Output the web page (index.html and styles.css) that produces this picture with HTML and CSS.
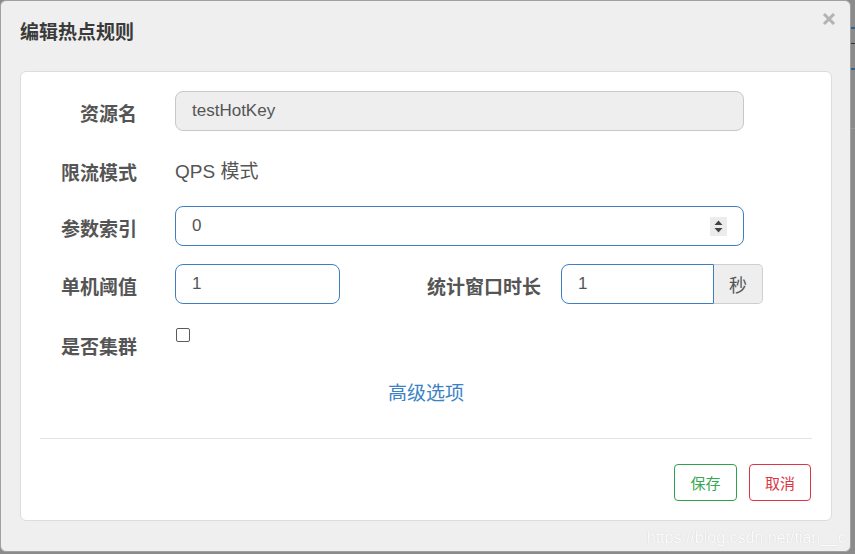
FILE: index.html
```html
<!DOCTYPE html>
<html lang="zh-CN">
<head>
<meta charset="utf-8">
<title>编辑热点规则</title>
<link rel="stylesheet" href="styles.css">
</head>
<body>
<div class="modal">
  <div class="modal-header">
    <h4 class="modal-title">编辑热点规则</h4>
    <span class="close" aria-label="关闭">
      <svg width="14" height="14" viewBox="0 0 14 14"><path d="M2 2 L12 12 M12 2 L2 12" stroke="#b3b3b3" stroke-width="3" stroke-linecap="butt"/></svg>
    </span>
  </div>
  <div class="panel">
    <div class="form-row r1">
      <label class="label">资源名</label>
      <input class="control wide disabled" type="text" value="testHotKey" disabled>
    </div>
    <div class="form-row r2">
      <label class="label">限流模式</label>
      <span class="static">QPS 模式</span>
    </div>
    <div class="form-row r3">
      <label class="label">参数索引</label>
      <div class="control wide number">
        <input class="bare" type="text" value="0">
        <span class="spinner">
          <svg width="17" height="19" viewBox="0 0 17 19"><path d="M4.5 8 L8.5 3.5 L12.5 8 Z M4.5 11 L8.5 15.5 L12.5 11 Z" fill="#444"/></svg>
        </span>
      </div>
    </div>
    <div class="form-row r4">
      <label class="label">单机阈值</label>
      <input class="control short" type="text" value="1">
      <label class="label label2">统计窗口时长</label>
      <div class="group">
        <input class="control grouped" type="text" value="1">
        <span class="addon">秒</span>
      </div>
    </div>
    <div class="form-row r5">
      <label class="label">是否集群</label>
      <span class="checkbox"></span>
    </div>
    <div class="more"><a class="link">高级选项</a></div>
    <div class="divider"></div>
    <div class="footer">
      <button class="btn btn-save">保存</button>
      <button class="btn btn-cancel">取消</button>
    </div>
  </div>
  <div class="watermark">https://blog.csdn.net/tian__c</div>
</div>
</body>
</html>
```
FILE: styles.css
```css
html, body {
  margin: 0;
  padding: 0;
}
body {
  width: 855px;
  height: 554px;
  overflow: hidden;
  background: linear-gradient(to bottom,
    #8b8b8b 0, #8b8b8b 27px, #2f5f8c 27px, #2f5f8c 29px,
    #8b8b8b 29px, #8b8b8b 43px, #333 43px, #333 44px,
    #8b8b8b 44px, #8b8b8b 68px, #2f5f8c 68px, #2f5f8c 70px,
    #8b8b8b 70px, #8b8b8b 128px, #9a9a9a 128px, #9a9a9a 129px,
    #8b8b8b 129px);
  font-family: "Noto Sans CJK SC", "Liberation Sans", sans-serif;
}
.modal {
  position: relative;
  box-sizing: border-box;
  width: 851px;
  height: 552px;
  background: #efefef;
  border: 1px solid #a0a0a0;
  border-radius: 6px;
  padding: 0 17px 0 19px;
}
.modal-header {
  height: 70px;
  display: flex;
  justify-content: space-between;
  align-items: flex-start;
}
.modal-title {
  margin: 0;
  padding-top: 16px;
  font-size: 19px;
  line-height: 28px;
  font-weight: bold;
  color: #3a3a3a;
}
.close {
  display: block;
  margin-top: 11px;
  margin-right: -3px;
  width: 14px;
  height: 14px;
}
.close svg { display: block; }
.panel {
  box-sizing: border-box;
  width: 812px;
  height: 450px;
  background: #fff;
  border: 1px solid #dcdcdc;
  border-radius: 6px;
  padding: 19px 19px 0 19px;
}
.form-row {
  display: flex;
  align-items: center;
  height: 40px;
}
.r1 { margin-bottom: 19px; }
.r2 { margin-bottom: 16px; }
.r2 .static { position: relative; top: 2px; }
.r3 { margin-bottom: 18px; }
.r4 { margin-bottom: 21px; }
.r5 { height: 44px; align-items: flex-start; margin-bottom: 9px; }
.label {
  position: relative;
  top: 2px;
  box-sizing: border-box;
  width: 97px;
  flex: none;
  text-align: right;
  font-size: 19px;
  font-weight: bold;
  color: #555;
  line-height: 40px;
  margin-right: 38px;
}
.r5 .label { line-height: 44px; top: -1px; }
.label2 {
  width: 201px;
  margin-right: 20px;
}
.static {
  font-size: 19px;
  line-height: 40px;
  color: #555;
  font-family: "Liberation Sans", "Noto Sans CJK SC", sans-serif;
}
.control {
  box-sizing: border-box;
  height: 40px;
  border: 1px solid #3d7fbf;
  border-radius: 8px;
  background: #fff;
  padding: 0 16px;
  font-family: "Liberation Sans", "Noto Sans CJK SC", sans-serif;
  font-size: 17px;
  color: #555;
  outline: none;
  margin: 0;
}
.wide { width: 569px; }
.short { width: 165px; }
.disabled {
  background: #eee;
  border-color: #c8c8c8;
  color: #555;
  -webkit-text-fill-color: #555;
  opacity: 1;
}
.number {
  display: flex;
  align-items: center;
  justify-content: space-between;
}
.bare {
  border: none;
  outline: none;
  padding: 0;
  margin: 0;
  width: 400px;
  font-family: "Liberation Sans", sans-serif;
  font-size: 17px;
  color: #555;
  background: transparent;
}
.spinner {
  display: block;
  width: 17px;
  height: 19px;
  background: #ececec;
}
.spinner svg { display: block; }
.group {
  display: flex;
  height: 40px;
}
.grouped {
  width: 153px;
  border-radius: 8px 0 0 8px;
}
.addon {
  box-sizing: border-box;
  width: 49px;
  height: 40px;
  background: #eee;
  border: 1px solid #cfcfcf;
  border-left: none;
  border-radius: 0 5px 5px 0;
  display: flex;
  align-items: center;
  justify-content: center;
  font-size: 18px;
  color: #555;
}
.checkbox {
  display: block;
  box-sizing: border-box;
  width: 14px;
  height: 14px;
  border: 1px solid #5a5a5a;
  border-radius: 2px;
  margin-top: 3px;
  margin-left: 1px;
}
.more {
  text-align: center;
  line-height: 28px;
  height: 28px;
}
.link {
  font-size: 19px;
  color: #3b82c4;
  text-decoration: none;
}
.divider {
  height: 1px;
  background: #e3e3e3;
  margin-top: 32px;
}
.footer {
  display: flex;
  justify-content: flex-end;
  gap: 12px;
  margin-top: 25px;
  margin-right: 1px;
}
.btn {
  box-sizing: border-box;
  height: 37px;
  padding: 0 14px;
  background: #fff;
  border: 1px solid;
  border-radius: 4px;
  font-family: "Noto Sans CJK SC", sans-serif;
  font-size: 15px;
  line-height: 35px;
}
.btn-save {
  width: 63px;
  border-color: #2ca24c;
  color: #34a853;
}
.btn-cancel {
  width: 62px;
  border-color: #dc3545;
  color: #dc3545;
}
.watermark {
  position: absolute;
  right: 4px;
  bottom: 4px;
  font-family: "Liberation Sans", sans-serif;
  font-size: 16px;
  line-height: 18px;
  color: rgba(255, 255, 255, 0.95);
  text-shadow: 0 0 1px rgba(0, 0, 0, 0.16);
}
```
